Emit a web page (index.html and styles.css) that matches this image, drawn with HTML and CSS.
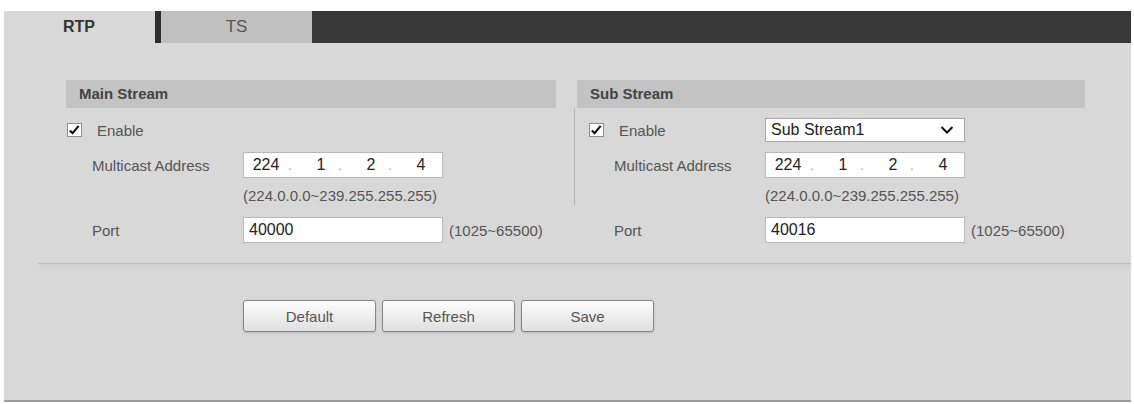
FILE: index.html
```html
<!DOCTYPE html>
<html lang="en">
<head>
  <meta charset="UTF-8" />
  <title>Multicast</title>
  <link rel="stylesheet" href="styles.css">
</head>
<body>
  <div class="panel">
    <!-- onglets -->
    <div class="tabs">
      <div class="tab tab-active">RTP</div>
      <div class="tab-sep"></div>
      <div class="tab tab-off">TS</div>
      <div class="tab-rest"></div>
    </div>

    <div class="content">
      <div class="streams">
        <!-- Main Stream -->
        <div class="col col-main">
          <div class="col-head">Main Stream</div>
          <div class="block">
            <div class="row row-enable">
              <span class="chk"><svg width="15" height="14" viewBox="0 0 15 14"><path d="M3 7.5 L6 10.5 L12.5 2.5" fill="none" stroke="#111" stroke-width="2.2"/></svg></span>
              <span class="chk-label">Enable</span>
            </div>
            <div class="row row-field">
              <span class="label">Multicast Address</span>
              <div class="ip">
                <span class="oct">224</span><span class="dot">.</span>
                <span class="oct">1</span><span class="dot">.</span>
                <span class="oct">2</span><span class="dot">.</span>
                <span class="oct">4</span>
              </div>
            </div>
            <div class="row row-hint">(224.0.0.0~239.255.255.255)</div>
          </div>
          <div class="row row-field row-port">
            <span class="label">Port</span>
            <div class="txt">40000</div>
            <span class="hint">(1025~65500)</span>
          </div>
        </div>

        <!-- Sub Stream -->
        <div class="col col-sub">
          <div class="col-head">Sub Stream</div>
          <div class="block">
            <div class="row row-enable">
              <span class="chk"><svg width="15" height="14" viewBox="0 0 15 14"><path d="M3 7.5 L6 10.5 L12.5 2.5" fill="none" stroke="#111" stroke-width="2.2"/></svg></span>
              <span class="chk-label">Enable</span>
              <div class="select">
                <span>Sub Stream1</span>
                <svg width="14" height="10" viewBox="0 0 14 10"><path d="M1.5 2 L7 7.5 L12.5 2" fill="none" stroke="#111" stroke-width="2"/></svg>
              </div>
            </div>
            <div class="row row-field">
              <span class="label">Multicast Address</span>
              <div class="ip">
                <span class="oct">224</span><span class="dot">.</span>
                <span class="oct">1</span><span class="dot">.</span>
                <span class="oct">2</span><span class="dot">.</span>
                <span class="oct">4</span>
              </div>
            </div>
            <div class="row row-hint">(224.0.0.0~239.255.255.255)</div>
          </div>
          <div class="row row-field row-port">
            <span class="label">Port</span>
            <div class="txt">40016</div>
            <span class="hint">(1025~65500)</span>
          </div>
        </div>
      </div>

      <div class="divider"></div>

      <div class="actions">
        <button class="btn">Default</button>
        <button class="btn">Refresh</button>
        <button class="btn">Save</button>
      </div>
    </div>
  </div>
</body>
</html>
```

FILE: styles.css
```css
body {
  margin: 0;
  background: #fff;
  font-family: 'Liberation Sans', Arial, sans-serif;
  color: #555;
}
.panel {
  margin: 11px 3px 0 4px;
  height: 389px;
  background: #d8d8d8;
  border-bottom: 2px solid #9c9c9c;
}

/* onglets */
.tabs { display: flex; height: 32px; }
.tab { line-height: 32px; }
.tab-active {
  width: 151px;
  padding-left: 59px;
  box-sizing: border-box;
  font-weight: bold;
  font-size: 16px;
  color: #333;
}
.tab-sep { width: 6px; background: #2e2e2e; }
.tab-off {
  width: 151px;
  background: #c0c0c0;
  text-align: center;
  font-size: 17px;
  color: #555;
}
.tab-rest { flex: 1; background: #383838; }

/* colonnes */
.content { padding-top: 37px; }
.streams { display: flex; gap: 21px; margin-left: 62px; }
.col-main { width: 490px; }
.col-sub { width: 508px; }
.col-head {
  height: 28px;
  line-height: 28px;
  padding-left: 13px;
  background: #c3c3c3;
  font-weight: bold;
  font-size: 15px;
  color: #444;
}
.block { padding-left: 1px; padding-top: 10px; }
.col-sub .block {
  margin-left: -3px;
  padding-left: 14px;
  border-left: 1px solid #b4b4b4;
}
.col-sub .row-port { padding-left: 12px; }

.row { display: flex; align-items: center; font-size: 15px; }
.row-enable { height: 24px; }
.chk {
  width: 13px;
  height: 12px;
  background: #fff;
  border: 1px solid #8e8e8e;
  display: flex;
}
.chk svg { margin: -1px 0 0 -1px; }
.chk-label { margin-left: 15px; width: 146px; }
.row-field { height: 26px; margin-top: 10px; }
.row-field .label { width: 151px; padding-left: 25px; flex: none; }
.row-port { margin-top: 12px; padding-left: 1px; }
.row-hint {
  height: 20px;
  margin-top: 7px;
  padding-left: 176px;
  color: #555;
}

.ip, .txt, .select {
  width: 198px;
  height: 24px;
  background: #fff;
  border: 1px solid #b8b8b8;
  color: #222;
  font-size: 16px;
  display: flex;
  align-items: center;
}
.ip .oct { width: 44px; text-align: center; }
.ip .oct ~ .oct { padding-left: 10px; width: 34px; }
.ip .dot { width: 6px; color: #aaa; font-size: 14px; }
.txt { padding-left: 5px; width: 193px; }
.select {
  justify-content: space-between;
  padding: 0 10px 0 5px;
  width: 183px;
  height: 22px;
  border-color: #a8a8a8;
}
.hint { margin-left: 6px; color: #555; }

.divider {
  height: 1px;
  margin: 20px 0 0 34px;
  background: #bcbcbc;
  box-shadow: 0 2px 3px rgba(0, 0, 0, .10);
}

/* boutons */
.actions { display: flex; gap: 6px; margin: 36px 0 0 239px; }
.btn {
  width: 133px;
  height: 32px;
  font-family: 'Liberation Sans', Arial, sans-serif;
  font-size: 15px;
  color: #555;
  border: 1px solid #858585;
  border-radius: 3px;
  background: linear-gradient(#fdfdfd, #e0e0e0);
  box-shadow: 0 1px 2px rgba(0, 0, 0, .15);
}
```
